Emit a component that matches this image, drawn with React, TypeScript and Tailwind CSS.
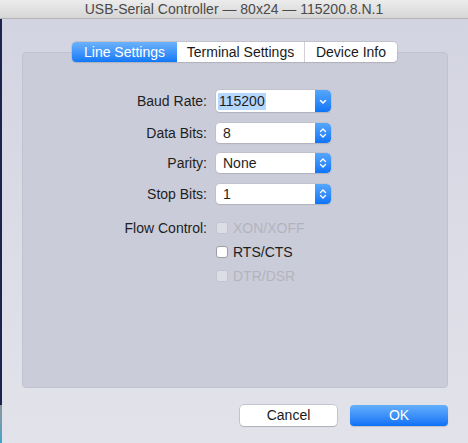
import React from "react";

const font = { fontFamily: '"Liberation Sans", Arial, sans-serif' };

function Chevron({ double }: { double?: boolean }) {
  return (
    <svg width="16" height="100%" viewBox="0 0 16 20" className="block">
      {double ? (
        <>
          <path d="M5.5 8.5 L8 6 L10.5 8.5" fill="none" stroke="white" strokeWidth="1.4" strokeLinecap="round" strokeLinejoin="round" />
          <path d="M5.5 11.5 L8 14 L10.5 11.5" fill="none" stroke="white" strokeWidth="1.4" strokeLinecap="round" strokeLinejoin="round" />
        </>
      ) : (
        <path d="M5.5 9.5 L8 12 L10.5 9.5" fill="none" stroke="white" strokeWidth="1.5" strokeLinecap="round" strokeLinejoin="round" />
      )}
    </svg>
  );
}

function Popup({ value }: { value: string }) {
  return (
    <div className="flex h-[20px] w-[115px] rounded-[4px] bg-white shadow-[0_0_0_0.5px_#b8b8c0,0_1px_1px_rgba(0,0,0,0.15)] overflow-hidden">
      <div className="flex-1 pl-[7px] text-[14px] leading-[20px] text-[#1e1e1e]">{value}</div>
      <div className="w-[16px] h-full bg-gradient-to-b from-[#55a6fb] to-[#0c74f7] rounded-r-[4px]">
        <Chevron double />
      </div>
    </div>
  );
}

function Row({ label, children }: { label: string; children: React.ReactNode }) {
  return (
    <div className="flex items-center">
      <div className="w-[171px] text-right pr-[9px] text-[14px] leading-[20px] text-[#1e1e1e]">{label}</div>
      {children}
    </div>
  );
}

function Check({ label, disabled }: { label: string; disabled?: boolean }) {
  return (
    <div className="flex items-center h-[12px]">
      <div
        className={
          "w-[12px] h-[12px] rounded-[3px] border " +
          (disabled ? "border-[#c4c5cf] bg-[#dcdde5]" : "border-[#9d9da5] bg-white")
        }
      />
      <span className={"ml-[5px] text-[14px] leading-[16px] " + (disabled ? "text-[#b3b4bd]" : "text-[#1e1e1e]")}>{label}</span>
    </div>
  );
}

export default function App() {
  return (
    <div className="w-[468px] h-[443px] overflow-hidden flex flex-col" style={font}>
      <div className="h-[19px] shrink-0 bg-gradient-to-b from-[#ececec] to-[#d6d6d6] border-b border-[#b4b4b4] flex items-center justify-center text-[14px] text-[#4a4a4a]">
        USB-Serial Controller — 80x24 — 115200.8.N.1
      </div>
      <div className="flex-1 flex">
        <div className="w-[2px] flex flex-col">
          <div className="h-[386px] bg-[#1b2350]" />
          <div className="flex-1 bg-gradient-to-b from-[#8e959b] to-[#3aa6c4]" />
        </div>
        <div className="flex-1 bg-gradient-to-b from-[#d3d4e1] to-[#e2e3ea] flex flex-col pl-[20px] pr-[20px] pt-[23px]">
          <div className="relative">
            <div className="absolute left-[50px] top-0 z-10 flex h-[20px] rounded-[4px] bg-white shadow-[0_0_0_0.5px_#b0b0b8,0_1px_1px_rgba(0,0,0,0.12)] text-[14px] overflow-hidden">
              <div className="w-[105px] flex items-center justify-center text-white bg-gradient-to-b from-[#6ab2fb] to-[#0e78f8]">Line Settings</div>
              <div className="w-[128px] flex items-center justify-center text-[#1a1a1a] border-r border-[#d0d0d6]">Terminal Settings</div>
              <div className="w-[92px] flex items-center justify-center text-[#1a1a1a]">Device Info</div>
            </div>
            <div className="mt-[10px] h-[336px] rounded-[4px] bg-[#cbccd9] border border-[#c2c3d0] pt-[37px] pl-[22px]">
              <div className="flex flex-col gap-[10.5px]">
                <Row label="Baud Rate:">
                  <div className="flex h-[22px] w-[115px] rounded-[4px] bg-white shadow-[0_0_0_0.5px_#b8b8c0,0_1px_1px_rgba(0,0,0,0.15)] overflow-hidden">
                    <div className="flex-1 pl-[2px] flex items-center">
                      <span className="bg-[#b4d7fe] text-[14px] leading-[17px] px-[1px] text-[#1e1e1e]">115200</span>
                    </div>
                    <div className="w-[16px] h-full bg-gradient-to-b from-[#55a6fb] to-[#0c74f7] rounded-r-[4px]">
                      <Chevron />
                    </div>
                  </div>
                </Row>
                <Row label="Data Bits:">
                  <Popup value="8" />
                </Row>
                <Row label="Parity:">
                  <Popup value="None" />
                </Row>
                <Row label="Stop Bits:">
                  <Popup value="1" />
                </Row>
              </div>
              <div className="mt-[17px] flex">
                <div className="w-[171px] text-right pr-[9px] text-[14px] text-[#1e1e1e] leading-[14px]">Flow Control:</div>
                <div className="flex flex-col gap-[12px] pt-[1px]">
                  <Check label="XON/XOFF" disabled />
                  <Check label="RTS/CTS" />
                  <Check label="DTR/DSR" disabled />
                </div>
              </div>
            </div>
          </div>
          <div className="mt-[17px] flex justify-end gap-[13px]">
            <div className="w-[97px] h-[21px] rounded-[4px] bg-white shadow-[0_0_0_0.5px_#a8a8b0,0_1px_1px_rgba(0,0,0,0.18)] flex items-center justify-center text-[14px] text-[#1a1a1a]">
              Cancel
            </div>
            <div className="w-[98px] h-[21px] rounded-[4px] bg-gradient-to-b from-[#64affb] to-[#0a70f6] shadow-[0_1px_1px_rgba(0,0,0,0.15)] flex items-center justify-center text-[14px] text-white">
              OK
            </div>
          </div>
        </div>
      </div>
    </div>
  );
}
